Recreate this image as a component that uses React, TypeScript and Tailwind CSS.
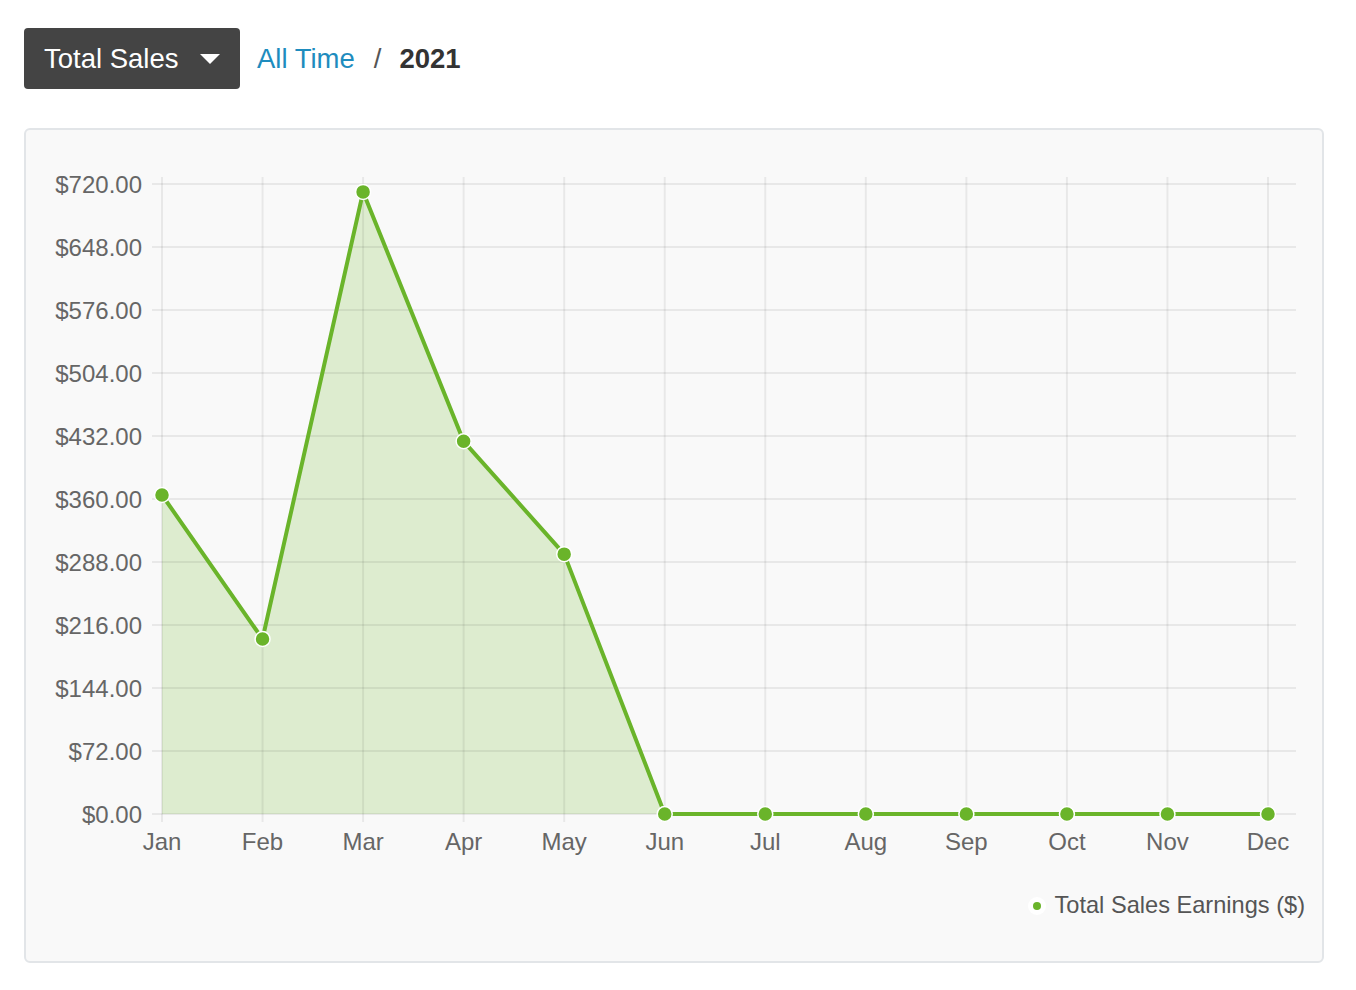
import React from "react";

const months = ["Jan","Feb","Mar","Apr","May","Jun","Jul","Aug","Sep","Oct","Nov","Dec"];
const values = [364.6, 200, 711, 426, 297, 0, 0, 0, 0, 0, 0, 0];
const yLabels = ["$720.00","$648.00","$576.00","$504.00","$432.00","$360.00","$288.00","$216.00","$144.00","$72.00","$0.00"];

const X0 = 136;
const STEP = (1242 - 136) / 11;
const YTOP = 54;
const YBOT = 684;
const xAt = (i: number) => X0 + i * STEP;
const yAt = (v: number) => YBOT - (v / 720) * (YBOT - YTOP);

function Chart() {
  const pts = values.map((v, i) => [xAt(i), yAt(v)] as const);
  const line = pts.map((p, i) => `${i === 0 ? "M" : "L"}${p[0].toFixed(1)},${p[1].toFixed(1)}`).join(" ");
  const area = `${line} L${xAt(11).toFixed(1)},${YBOT} L${X0},${YBOT} Z`;
  return (
    <svg width="1296" height="740" viewBox="0 0 1296 740" className="block" style={{ fontFamily: '"Liberation Sans", Arial, sans-serif' }}>
      <path d={area} fill="rgba(110,184,42,0.2)" />
      {yLabels.map((l, i) => {
        const y = YTOP + i * 63;
        return (
          <g key={l}>
            <line x1={126} x2={1270} y1={y} y2={y} stroke="rgba(0,0,0,0.065)" strokeWidth={2} />
            <text x={116} y={y} dominantBaseline="central" textAnchor="end" fontSize={24} fill="#666">{l}</text>
          </g>
        );
      })}
      {months.map((m, i) => (
        <g key={m}>
          <line x1={xAt(i)} x2={xAt(i)} y1={47} y2={692} stroke="rgba(0,0,0,0.065)" strokeWidth={2} />
          <text x={xAt(i)} y={720} textAnchor="middle" fontSize={24} fill="#666">{m}</text>
        </g>
      ))}
      <path d={line} fill="none" stroke="#6ab42a" strokeWidth={4} strokeLinejoin="round" />
      {pts.map((p, i) => (
        <circle key={i} cx={p[0]} cy={p[1]} r={7.5} fill="#6ab42a" stroke="#fff" strokeWidth={1.5} />
      ))}
    </svg>
  );
}

export default function App() {
  return (
    <div className="min-h-[990px] bg-white pl-6 pt-7" style={{ fontFamily: '"Liberation Sans", Arial, sans-serif' }}>
      <div className="flex items-center">
        <button className="flex h-[61px] w-[216px] items-center rounded bg-[#444444] pl-5 text-[27.5px] text-white">
          <span>Total Sales</span>
          <svg width="20" height="10" viewBox="0 0 20 10" className="ml-[21px]">
            <path d="M0 0 L20 0 L10 10 Z" fill="#fff" />
          </svg>
        </button>
        <a className="ml-[17px] text-[27.5px] text-[#1e8cbe]">All Time</a>
        <span className="ml-[19px] text-[27.5px] text-[#555]">/</span>
        <span className="ml-[18px] text-[27.5px] font-bold text-[#333]">2021</span>
      </div>
      <div className="mt-[39px] h-[835px] w-[1300px] rounded-md border-2 border-[#e2e5e8] bg-[#f9f9f9]">
        <Chart />
        <div className="mt-[24px] flex items-center justify-end pr-[17px]">
          <span className="mr-[9px] flex h-[18px] w-[18px] items-center justify-center rounded-full bg-white">
            <span className="block h-[8px] w-[8px] rounded-full bg-[#6ab42a]" />
          </span>
          <span className="text-[23.6px] leading-none text-[#555]">Total Sales Earnings ($)</span>
        </div>
      </div>
    </div>
  );
}
